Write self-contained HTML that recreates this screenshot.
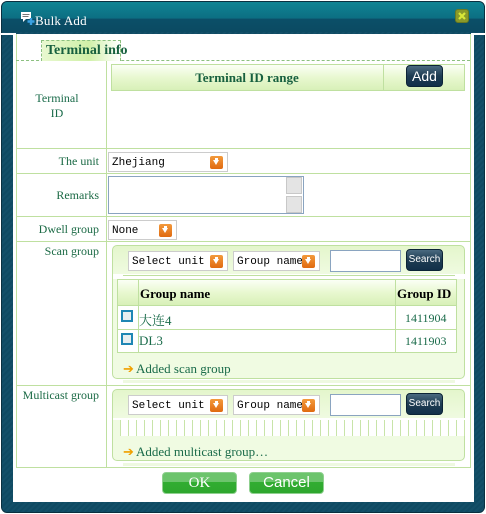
<!DOCTYPE html>
<html><head><meta charset="utf-8"><style>
*{margin:0;padding:0;box-sizing:border-box}
body{width:486px;height:514px;background:#fff;position:relative;overflow:hidden;font-family:"Liberation Serif","Noto Serif CJK SC",serif;font-size:12px;color:#1a6b4a}
.a{position:absolute}
.outer{left:1px;top:1px;width:484px;height:512px;border-radius:6px;background:repeating-linear-gradient(135deg,#0f4a62 0 2px,#134f68 2px 4px);border:1px solid #0a3040}
.title{left:2px;top:2px;width:482px;height:30px;border-radius:5px 5px 0 0;background:linear-gradient(#0f8494,#0c6e82 55%,#0b4f68 56%,#0b4a62)}
.body{left:13px;top:34px;width:461px;height:468px;background:#fff}
.ln{background:#bfe0a0}
.lbl{text-align:right;color:#1b6a45}
.sel{background:#fff;border:1px solid #ccc;font-family:"Liberation Mono",monospace;font-size:11px;color:#000;padding:4px 0 0 3px;height:20px;white-space:nowrap;overflow:hidden}
.arr{position:absolute;right:4px;top:3px;width:13px;height:13px;border-radius:2px;background:linear-gradient(#f39a3c,#e06a10);}
.arr:after{content:"";position:absolute;left:3px;top:4px;border:3.5px solid transparent;border-top:5px solid #fff}
.arr:before{content:"";position:absolute;left:5px;top:2px;width:3px;height:3px;background:#fff}
.btn{background:linear-gradient(#4a6a80,#1e3c52 50%,#12304a);border:1px solid #0c2436;border-radius:4px;color:#fff;font-family:"Liberation Sans",sans-serif;text-align:center}
.box{border:1px solid #bfe0a0;border-radius:5px;background:linear-gradient(#e4f6cc,#f0fbe2 30px,#f0fbe2)}
.inp{background:#fff;border:1px solid #8aa4c0}
.gbtn{background:linear-gradient(#6cc46c 0,#6cc46c 45%,#31ad31 46%,#2ea62e);border:1px solid #8fd08f;border-radius:4px;color:#fff;text-align:center;font-size:15px;line-height:20px}
.hdr{background:linear-gradient(#fbfff5,#e8f8d0 50%,#d8f0b8)}
.cb{width:12px;height:12px;border:2px solid #1f86b4;background:#e8eef0}
</style></head><body>
<div class="a outer"></div>
<div class="a title"></div>
<svg class="a" style="left:21px;top:12px" width="14" height="13" viewBox="0 0 14 13"><rect x="0" y="0" width="10" height="7" fill="#fff"/><path d="M2 7 L2 10 L5 7Z" fill="#fff"/><rect x="1.5" y="2" width="7" height="1" fill="#777"/><rect x="1.5" y="4" width="6" height="1" fill="#777"/><path d="M10 6v7M6.5 9.5h7" stroke="#3aa0e0" stroke-width="2.4"/></svg>
<div class="a" style="left:35px;top:13px;color:#fff;font-size:13px;letter-spacing:0.2px">Bulk Add</div>
<div class="a" style="left:455px;top:9px;width:14px;height:14px;border-radius:3px;background:#8a9a2a;border:1px solid #6a7a20"><svg width="12" height="12" viewBox="0 0 12 12"><path d="M3 3L9 9M9 3L3 9" stroke="#d8e838" stroke-width="2.2"/></svg></div>
<div class="a body"></div>
<div class="a" style="left:0;top:33px;width:16px;height:2px;background:#fff"></div>
<div class="a" style="left:471px;top:33px;width:15px;height:2px;background:#fff"></div>
<div class="a ln" style="left:16px;top:34px;width:1px;height:434px"></div>
<div class="a ln" style="left:470px;top:34px;width:1px;height:434px"></div>
<div class="a ln" style="left:16px;top:467px;width:455px;height:1px"></div>
<div class="a" style="left:16px;top:60px;width:454px;border-top:1px dashed #8cc080"></div>
<div class="a" style="left:41px;top:40px;width:80px;height:21px;border:1px dashed #8cc080;border-bottom:none;background:linear-gradient(90deg,#e8f8d0,#d0f0a8 60%,#fff)"></div>
<div class="a" style="left:46px;top:43px;font-weight:bold;font-size:14px;color:#17603f">Terminal info</div>
<div class="a ln" style="left:106px;top:61px;width:1px;height:407px"></div>
<div class="a ln" style="left:16px;top:148px;width:454px;height:1px"></div>
<div class="a ln" style="left:16px;top:173px;width:454px;height:1px"></div>
<div class="a ln" style="left:16px;top:216px;width:454px;height:1px"></div>
<div class="a ln" style="left:16px;top:241px;width:454px;height:1px"></div>
<div class="a ln" style="left:16px;top:385px;width:454px;height:1px"></div>
<div class="a" style="left:34px;top:91px;width:46px;text-align:center;line-height:15px">Terminal<br>ID</div>
<div class="a lbl" style="left:16px;top:154px;width:83px">The unit</div>
<div class="a lbl" style="left:16px;top:188px;width:83px">Remarks</div>
<div class="a lbl" style="left:16px;top:222px;width:83px">Dwell group</div>
<div class="a lbl" style="left:16px;top:244px;width:83px">Scan group</div>
<div class="a lbl" style="left:16px;top:388px;width:83px">Multicast group</div>
<div class="a hdr" style="left:111px;top:64px;width:354px;height:27px;border:1px solid #bfe0a0"></div>
<div class="a ln" style="left:383px;top:64px;width:1px;height:27px"></div>
<div class="a" style="left:111px;top:70px;width:272px;text-align:center;font-weight:bold;font-size:13px;color:#17603f">Terminal ID range</div>
<div class="a btn" style="left:406px;top:65px;width:37px;height:22px;font-size:14px;line-height:20px">Add</div>
<div class="a sel" style="left:108px;top:152px;width:120px">Zhejiang<span class="arr"></span></div>
<div class="a inp" style="left:108px;top:176px;width:196px;height:38px"></div>
<div class="a" style="left:286px;top:177px;width:16px;height:17px;background:#e4e4e4;border:1px solid #c8c8c8"></div>
<div class="a" style="left:286px;top:196px;width:16px;height:17px;background:#e4e4e4;border:1px solid #c8c8c8"></div>
<div class="a sel" style="left:108px;top:220px;width:69px">None<span class="arr"></span></div>
<div class="a box" style="left:112px;top:245px;width:353px;height:134px"></div>
<div class="a sel" style="left:128px;top:251px;width:100px">Select unit<span class="arr"></span></div>
<div class="a sel" style="left:233px;top:251px;width:87px">Group name<span class="arr"></span></div>
<div class="a inp" style="left:330px;top:250px;width:71px;height:22px"></div>
<div class="a btn" style="left:406px;top:249px;width:37px;height:22px;font-size:10px;line-height:19px">Search</div>
<div class="a" style="left:113px;top:274px;width:352px;height:5px;background:#fff"></div>
<div class="a ln" style="left:123px;top:275px;width:332px;height:1px"></div>
<div class="a" style="left:117px;top:279px;width:340px;height:74px;background:#fff;border:1px solid #bfe0a0"></div>
<div class="a hdr" style="left:118px;top:280px;width:338px;height:25px"></div>
<div class="a ln" style="left:117px;top:305px;width:340px;height:1px"></div>
<div class="a ln" style="left:117px;top:329px;width:340px;height:1px"></div>
<div class="a ln" style="left:138px;top:279px;width:1px;height:74px"></div>
<div class="a ln" style="left:395px;top:279px;width:1px;height:74px"></div>
<div class="a" style="left:140px;top:286px;font-weight:bold;font-size:13px;color:#000">Group name</div>
<div class="a" style="left:397px;top:286px;font-weight:bold;font-size:13px;color:#000">Group ID</div>
<div class="a cb" style="left:121px;top:310px"></div>
<div class="a cb" style="left:121px;top:333px"></div>
<div class="a" style="left:139px;top:310px;font-size:13px">大连4</div>
<div class="a" style="left:139px;top:333px;font-size:13px">DL3</div>
<div class="a" style="left:405px;top:311px">1411904</div>
<div class="a" style="left:405px;top:334px">1411903</div>
<div class="a" style="left:123px;top:361px;color:#f0a000;font-size:13px">➔</div>
<div class="a" style="left:136px;top:361px;font-size:13px">Added scan group</div>
<div class="a" style="left:123px;top:380px;width:332px;height:3px;background:#eef9e0"></div>
<div class="a box" style="left:112px;top:389px;width:353px;height:72px"></div>
<div class="a sel" style="left:128px;top:395px;width:100px">Select unit<span class="arr"></span></div>
<div class="a sel" style="left:233px;top:395px;width:87px">Group name<span class="arr"></span></div>
<div class="a inp" style="left:330px;top:394px;width:71px;height:22px"></div>
<div class="a btn" style="left:406px;top:393px;width:37px;height:22px;font-size:10px;line-height:19px">Search</div>
<div class="a" style="left:113px;top:418px;width:357px;height:2px;background:#fff"></div>
<div class="a" style="left:120px;top:420px;width:350px;height:16px;background:repeating-linear-gradient(90deg,#c8e4a8 0 1px,#fff 1px 8px)"></div>
<div class="a" style="left:123px;top:444px;color:#f0a000;font-size:13px">➔</div>
<div class="a" style="left:136px;top:444px;font-size:13px">Added multicast group…</div>
<div class="a" style="left:123px;top:463px;width:332px;height:3px;background:#eef9e0"></div>
<div class="a gbtn" style="left:162px;top:472px;width:75px;height:22px;font-family:'Liberation Serif',serif">OK</div>
<div class="a gbtn" style="left:249px;top:472px;width:75px;height:22px;font-family:'Liberation Sans',sans-serif">Cancel</div>
</body></html>
